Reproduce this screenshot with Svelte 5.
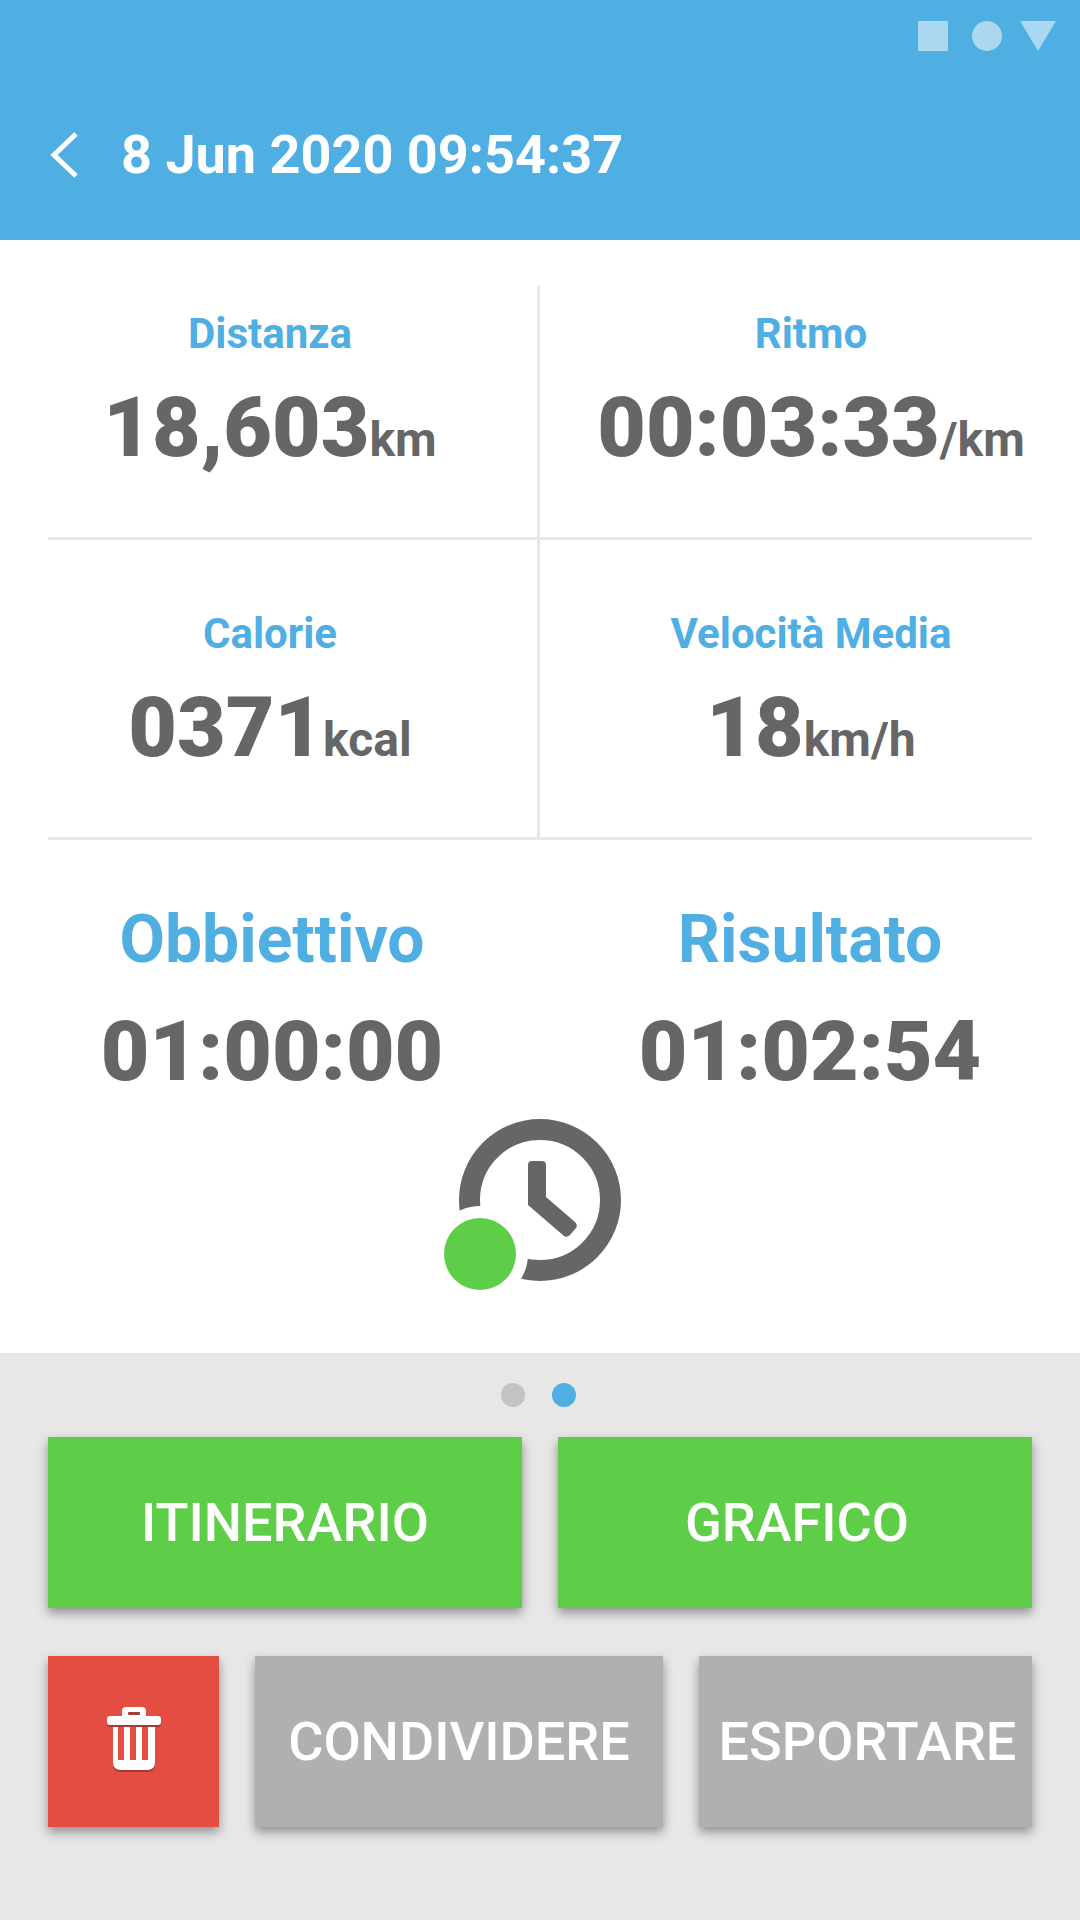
<script>
	const stats = [
		{ label: 'Distanza', value: '18,603', unit: 'km' },
		{ label: 'Ritmo', value: '00:03:33', unit: '/km' },
		{ label: 'Calorie', value: '0371', unit: 'kcal' },
		{ label: 'Velocità Media', value: '18', unit: 'km/h' }
	];
	const times = [
		{ label: 'Obbiettivo', value: '01:00:00' },
		{ label: 'Risultato', value: '01:02:54' }
	];
</script>

<div class="page">
	<header class="header">
		<div class="status">
			<span class="sq"></span>
			<span class="circle"></span>
			<svg class="tri" width="36" height="30" viewBox="0 0 36 30"><polygon points="0,0 36,0 18,30" fill="#abd7f0" /></svg>
		</div>
		<div class="title-row">
			<svg class="back" width="28" height="46" viewBox="0 0 28 46">
				<path d="M26 2 L4 23 L26 44" fill="none" stroke="#fff" stroke-width="5" />
			</svg>
			<h1>8 Jun 2020 09:54:37</h1>
		</div>
	</header>

	<main class="content">
		<section class="grid">
			{#each stats as s}
				<div class="cell">
					<div class="label">{s.label}</div>
					<div class="value">{s.value}<span class="unit">{s.unit}</span></div>
				</div>
			{/each}
		</section>

		<section class="times">
			{#each times as t}
				<div class="time">
					<div class="time-label">{t.label}</div>
					<div class="value">{t.value}</div>
				</div>
			{/each}
		</section>

		<div class="clock-wrap">
			<svg width="192" height="192" viewBox="0 0 192 192">
				<circle cx="96" cy="90" r="70.5" fill="none" stroke="#666" stroke-width="21" />
				<path d="M84 55 Q84 51 88 51 H98 Q102 51 102 55 V87 L131 112 Q134 115 132 118 L126 125 Q123 128 120 126 L84 95 Z" fill="#666" />
				<circle cx="36" cy="144" r="48" fill="#fff" />
				<circle cx="36" cy="144" r="36" fill="#5ece48" />
			</svg>
		</div>
	</main>

	<footer class="footer">
		<div class="dots">
			<span class="dot"></span>
			<span class="dot on"></span>
		</div>
		<div class="row two">
			<button class="btn green">ITINERARIO</button>
			<button class="btn green nudge">GRAFICO</button>
		</div>
		<div class="row three">
			<button class="btn red" aria-label="Elimina">
				<svg class="trash" width="56" height="68" viewBox="0 0 56 68">
					<g fill="#a83a34" transform="translate(0 2)">
						<rect x="1" y="10" width="54" height="9" rx="3" />
						<path d="M7 20 H49 V56 Q49 64 41 64 H15 Q7 64 7 56 Z" />
					</g>
					<path d="M16 10 V5 Q16 1 20 1 H36 Q40 1 40 5 V10 Z" fill="#fff" />
					<rect x="22" y="6" width="12" height="3" rx="1" fill="#a83a34" />
					<rect x="1" y="10" width="54" height="9" rx="3" fill="#fff" />
					<path d="M7 21 H49 V56 Q49 64 41 64 H15 Q7 64 7 56 Z" fill="#fff" />
					<g fill="#e54d43">
						<rect x="12" y="21" width="6" height="33" />
						<rect x="24" y="21" width="6" height="33" />
						<rect x="36" y="21" width="6" height="33" />
					</g>
				</svg>
			</button>
			<button class="btn grey">CONDIVIDERE</button>
			<button class="btn grey nudge">ESPORTARE</button>
		</div>
	</footer>
</div>

<style>
	:global(body) {
		margin: 0;
	}

	.page {
		width: 1080px;
		height: 1920px;
		display: flex;
		flex-direction: column;
		font-family: Roboto, 'Liberation Sans', sans-serif;
		background: #fff;
	}

	.header {
		height: 240px;
		box-sizing: border-box;
		background: #4faee2;
		padding: 21px 24px 0 48px;
		display: flex;
		flex-direction: column;
	}

	.status {
		display: flex;
		justify-content: flex-end;
		align-items: center;
		height: 30px;
	}

	.sq {
		width: 30px;
		height: 30px;
		margin-right: 24px;
		background: #abd7f0;
	}

	.circle {
		width: 30px;
		height: 30px;
		margin-right: 18px;
		border-radius: 50%;
		background: #abd7f0;
	}

	.title-row {
		display: flex;
		align-items: center;
		gap: 43px;
		margin-top: 73px;
	}

	.back {
		margin-left: 2px;
	}

	h1 {
		margin: 0;
		color: #fff;
		font-size: 54px;
		font-weight: 700;
		line-height: 62px;
	}

	.content {
		flex: 1;
		display: flex;
		flex-direction: column;
		padding: 46px 48px 0;
	}

	.grid {
		display: grid;
		grid-template-columns: 492px 492px;
		grid-template-rows: 254px 300px;
	}

	.cell {
		display: flex;
		flex-direction: column;
		justify-content: flex-end;
		text-align: center;
		border-bottom: 3px solid #e8e8e8;
		padding-bottom: 47px;
		box-sizing: border-box;
	}

	.cell:nth-child(odd) {
		border-right: 3px solid #e8e8e8;
		padding-right: 45px;
	}

	.cell:nth-child(even) {
		padding-left: 50px;
	}

	.label {
		color: #4faee2;
		font-size: 42px;
		font-weight: 700;
		line-height: 48px;
	}

	.value {
		color: #666;
		font-size: 84px;
		font-weight: 900;
		line-height: 100px;
		margin-top: 20px;
	}

	.unit {
		font-size: 48px;
		font-weight: 700;
	}

	.times {
		display: grid;
		grid-template-columns: 444px 444px;
		justify-content: space-between;
		text-align: center;
		padding-top: 64px;
		padding-left: 2px;
	}

	.time-label {
		color: #4faee2;
		font-size: 66px;
		font-weight: 700;
		line-height: 72px;
	}

	.time .value {
		margin-top: 26px;
	}

	.clock-wrap {
		display: flex;
		justify-content: center;
		margin-top: 8px;
	}

	.footer {
		height: 567px;
		box-sizing: border-box;
		background: #e7e7e7;
		padding: 30px 48px 0;
	}

	.dots {
		display: flex;
		justify-content: center;
		gap: 27px;
		padding-right: 3px;
	}

	.dot {
		width: 24px;
		height: 24px;
		border-radius: 50%;
		background: #c3c3c3;
	}

	.dot.on {
		background: #4faee2;
	}

	.row {
		display: grid;
		gap: 36px;
	}

	.two {
		grid-template-columns: 1fr 1fr;
		margin-top: 30px;
	}

	.three {
		grid-template-columns: 171px 408px 333px;
		margin-top: 48px;
	}

	.btn {
		height: 171px;
		border: 0;
		padding: 0;
		color: #fff;
		font-family: inherit;
		font-size: 54px;
		font-weight: 500;
		box-shadow: 0 5px 10px rgba(0, 0, 0, 0.38);
		display: flex;
		align-items: center;
		justify-content: center;
	}

	.nudge {
		padding-left: 4px;
	}

	.green {
		background: #5ece48;
	}

	.red {
		background: #e54d43;
	}

	.grey {
		background: #b0b0b0;
	}

	.trash {
		margin-bottom: 3px;
	}
</style>
